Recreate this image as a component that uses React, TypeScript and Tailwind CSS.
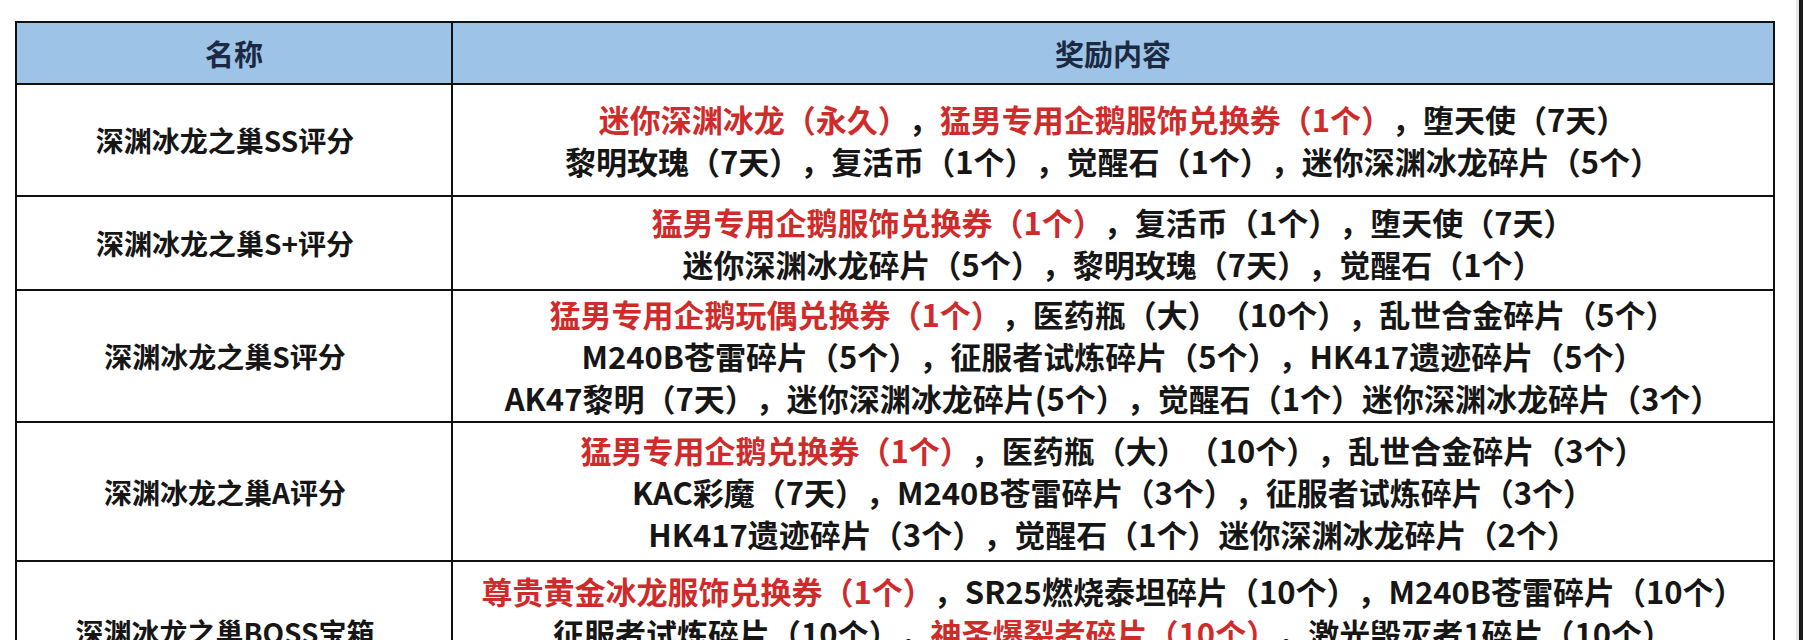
import React from "react";

type Seg = { t: string; red?: boolean };
type Line = Seg[];

const R = (t: string): Seg => ({ t, red: true });
const B = (t: string): Seg => ({ t });

const rows: { name: string; h: string; lines: Line[]; top?: boolean }[] = [
  {
    name: "深渊冰龙之巢SS评分",
    h: "h-[112px]",
    lines: [
      [R("迷你深渊冰龙（永久）"), B("，"), R("猛男专用企鹅服饰兑换券（1个）"), B("，堕天使（7天）")],
      [B("黎明玫瑰（7天），复活币（1个），觉醒石（1个），迷你深渊冰龙碎片（5个）")],
    ],
  },
  {
    name: "深渊冰龙之巢S+评分",
    h: "h-[94px]",
    lines: [
      [R("猛男专用企鹅服饰兑换券（1个）"), B("，复活币（1个），堕天使（7天）")],
      [B("迷你深渊冰龙碎片（5个），黎明玫瑰（7天），觉醒石（1个）")],
    ],
  },
  {
    name: "深渊冰龙之巢S评分",
    h: "h-[132px]",
    lines: [
      [R("猛男专用企鹅玩偶兑换券（1个）"), B("，医药瓶（大）（10个），乱世合金碎片（5个）")],
      [B("M240B苍雷碎片（5个），征服者试炼碎片（5个），HK417遗迹碎片（5个）")],
      [B("AK47黎明（7天），迷你深渊冰龙碎片(5个），觉醒石（1个）迷你深渊冰龙碎片（3个）")],
    ],
  },
  {
    name: "深渊冰龙之巢A评分",
    h: "h-[139px]",
    lines: [
      [R("猛男专用企鹅兑换券（1个）"), B("，医药瓶（大）（10个），乱世合金碎片（3个）")],
      [B("KAC彩魔（7天），M240B苍雷碎片（3个），征服者试炼碎片（3个）")],
      [B("HK417遗迹碎片（3个），觉醒石（1个）迷你深渊冰龙碎片（2个）")],
    ],
  },
  {
    name: "深渊冰龙之巢BOSS宝箱",
    h: "h-[150px]",
    top: true,
    lines: [
      [R("尊贵黄金冰龙服饰兑换券（1个）"), B("，SR25燃烧泰坦碎片（10个），M240B苍雷碎片（10个）")],
      [B("征服者试炼碎片（10个），"), R("神圣爆裂者碎片（10个）"), B("，激光毁灭者1碎片（10个）")],
    ],
  },
];

export default function App() {
  return (
    <div
      className="w-[1811px] h-[640px] overflow-hidden bg-white flex [text-spacing-trim:space-all]"
      style={{ fontFamily: '"Noto Sans CJK SC", "Microsoft YaHei", sans-serif' }}
    >
      <div className="pl-[15px] pt-[21px]">
        <div className="w-[1760px] border-2 border-[#111] border-b-0 font-bold text-[28px] leading-[42px] text-[#161616]">
          <div className="flex h-[62px] border-b-2 border-[#111] bg-[#9dc3e6] text-[#1c2942]">
            <div className="w-[436px] border-r-2 border-[#111] flex items-center justify-center text-[29px]">
              名称
            </div>
            <div className="flex-1 flex items-center justify-center text-[29px]">奖励内容</div>
          </div>
          {rows.map((r, i) => (
            <div key={i} className={`flex ${r.h} border-b-2 border-[#111]`}>
              <div
                className={`w-[436px] border-r-2 border-[#111] flex justify-center pr-[18px] ${
                  r.top ? "items-start pt-[49px]" : "items-center"
                }`}
              >
                {r.name}
              </div>
              <div
                className={`flex-1 flex flex-col items-center text-[31px] ${
                  r.top ? "justify-start pt-[8px]" : "justify-center"
                }`}
              >
                {r.lines.map((ln, j) => (
                  <div key={j} className="whitespace-nowrap">
                    {ln.map((s, k) => (
                      <span key={k} className={s.red ? "text-[#cf2b2b]" : ""}>
                        {s.t}
                      </span>
                    ))}
                  </div>
                ))}
              </div>
            </div>
          ))}
        </div>
      </div>
      <div className="w-[21px]" />
      <div className="w-[3px] bg-[#e6e6e6]" />
      <div className="w-[4px] h-full bg-[#1a1a1a]" />
    </div>
  );
}
